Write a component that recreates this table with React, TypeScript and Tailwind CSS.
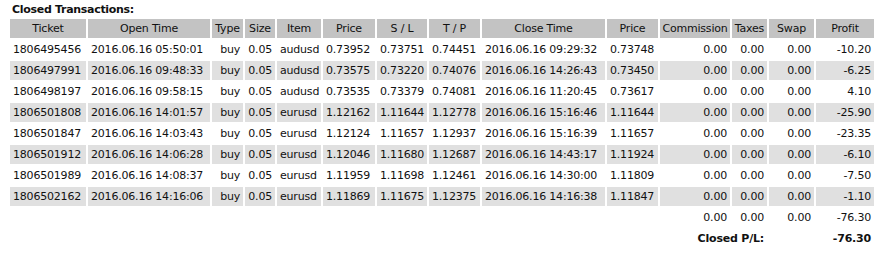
import React from "react";

type Row = string[];

const rows: Row[] = [
  ["1806495456", "2016.06.16 05:50:01", "buy", "0.05", "audusd", "0.73952", "0.73751", "0.74451", "2016.06.16 09:29:32", "0.73748", "0.00", "0.00", "0.00", "-10.20"],
  ["1806497991", "2016.06.16 09:48:33", "buy", "0.05", "audusd", "0.73575", "0.73220", "0.74076", "2016.06.16 14:26:43", "0.73450", "0.00", "0.00", "0.00", "-6.25"],
  ["1806498197", "2016.06.16 09:58:15", "buy", "0.05", "audusd", "0.73535", "0.73379", "0.74081", "2016.06.16 11:20:45", "0.73617", "0.00", "0.00", "0.00", "4.10"],
  ["1806501808", "2016.06.16 14:01:57", "buy", "0.05", "eurusd", "1.12162", "1.11644", "1.12778", "2016.06.16 15:16:46", "1.11644", "0.00", "0.00", "0.00", "-25.90"],
  ["1806501847", "2016.06.16 14:03:43", "buy", "0.05", "eurusd", "1.12124", "1.11657", "1.12937", "2016.06.16 15:16:39", "1.11657", "0.00", "0.00", "0.00", "-23.35"],
  ["1806501912", "2016.06.16 14:06:28", "buy", "0.05", "eurusd", "1.12046", "1.11680", "1.12687", "2016.06.16 14:43:17", "1.11924", "0.00", "0.00", "0.00", "-6.10"],
  ["1806501989", "2016.06.16 14:08:37", "buy", "0.05", "eurusd", "1.11959", "1.11698", "1.12461", "2016.06.16 14:30:00", "1.11809", "0.00", "0.00", "0.00", "-7.50"],
  ["1806502162", "2016.06.16 14:16:06", "buy", "0.05", "eurusd", "1.11869", "1.11675", "1.12375", "2016.06.16 14:16:38", "1.11847", "0.00", "0.00", "0.00", "-1.10"],
];

const headers = ["Ticket", "Open Time", "Type", "Size", "Item", "Price", "S / L", "T / P", "Close Time", "Price", "Commission", "Taxes", "Swap", "Profit"];

// alignment per column: true = right aligned
const rightCols = [false, false, true, true, false, false, false, false, false, false, true, true, true, true];

export default function App() {
  return (
    <div
      className="w-[881px] h-[256px] overflow-hidden bg-white text-[#111] text-[11px] tracking-[-0.2px]"
      style={{ fontFamily: '"DejaVu Sans", Verdana, sans-serif' }}
    >
      <div className="pl-[12px] h-[19px] leading-[19px] font-bold tracking-[-0.3px]">Closed Transactions:</div>
      <div className="ml-[10px] grid grid-cols-[76px_122px_31px_30px_44px_52px_50px_51px_123px_51px_70px_35px_45px_58px] gap-[2px] auto-rows-[19px]">
        {headers.map((h, i) => (
          <div key={"h" + i} className="bg-[#c3c3c3] text-center leading-[19px] whitespace-nowrap">
            {h}
          </div>
        ))}
        {rows.map((r, ri) =>
          r.map((c, ci) => (
            <div
              key={ri + "-" + ci}
              className={
                (ri % 2 === 1 ? "bg-[#e0e0e0] " : "bg-white ") +
                (rightCols[ci] ? "text-right " : "text-left ") +
                "px-[3px] leading-[19px] whitespace-nowrap"
              }
            >
              {c}
            </div>
          ))
        )}
        <div className="col-span-10" />
        <div className="px-[3px] text-right leading-[19px]">0.00</div>
        <div className="px-[3px] text-right leading-[19px]">0.00</div>
        <div className="px-[3px] text-right leading-[19px]">0.00</div>
        <div className="px-[3px] text-right leading-[19px]">-76.30</div>
        <div className="col-span-10" />
        <div className="col-span-2 px-[3px] text-right leading-[19px] font-bold whitespace-nowrap">Closed P/L:</div>
        <div />
        <div className="px-[3px] text-right leading-[19px] font-bold">-76.30</div>
      </div>
    </div>
  );
}
